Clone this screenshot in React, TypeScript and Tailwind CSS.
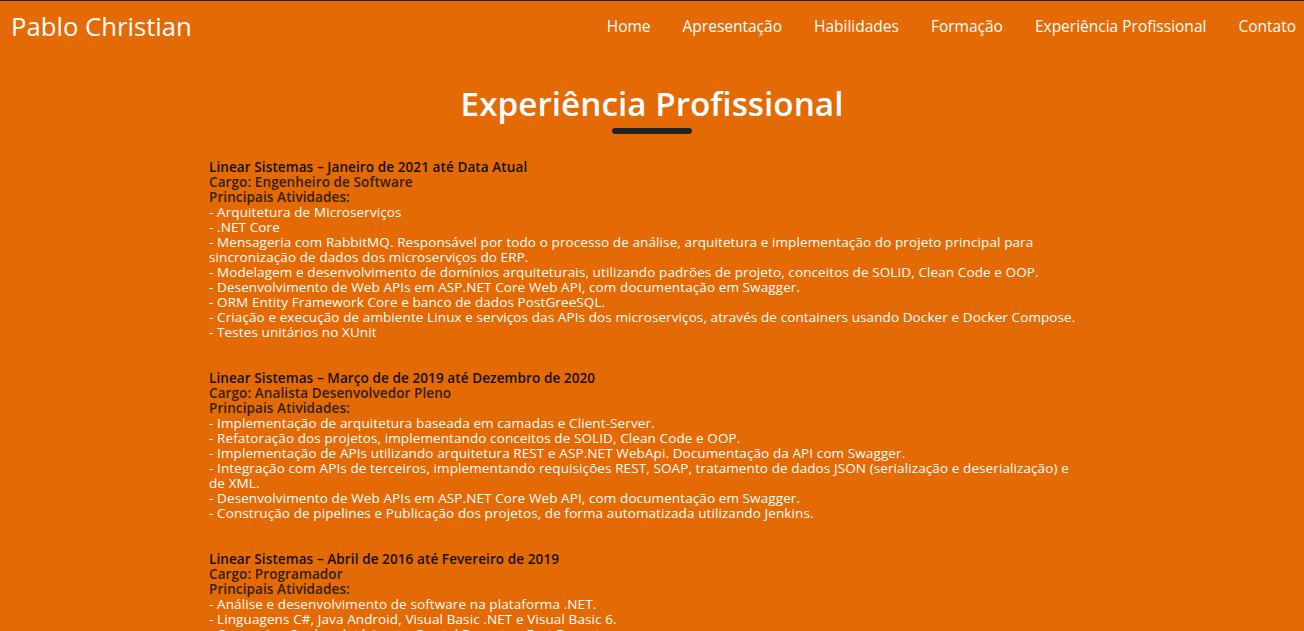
import React from "react";

const jobs = [
  {
    title: "Linear Sistemas – Janeiro de 2021 até Data Atual",
    cargo: "Cargo: Engenheiro de Software",
    items: [
      "- Arquitetura de Microserviços",
      "- .NET Core",
      "- Mensageria com RabbitMQ. Responsável por todo o processo de análise, arquitetura e implementação do projeto principal para sincronização de dados dos microserviços do ERP.",
      "- Modelagem e desenvolvimento de domínios arquiteturais, utilizando padrões de projeto, conceitos de SOLID, Clean Code e OOP.",
      "- Desenvolvimento de Web APIs em ASP.NET Core Web API, com documentação em Swagger.",
      "- ORM Entity Framework Core e banco de dados PostGreeSQL.",
      "- Criação e execução de ambiente Linux e serviços das APIs dos microserviços, através de containers usando Docker e Docker Compose.",
      "- Testes unitários no XUnit",
    ],
  },
  {
    title: "Linear Sistemas – Março de de 2019 até Dezembro de 2020",
    cargo: "Cargo: Analista Desenvolvedor Pleno",
    items: [
      "- Implementação de arquitetura baseada em camadas e Client-Server.",
      "- Refatoração dos projetos, implementando conceitos de SOLID, Clean Code e OOP.",
      "- Implementação de APIs utilizando arquitetura REST e ASP.NET WebApi. Documentação da API com Swagger.",
      "- Integração com APIs de terceiros, implementando requisições REST, SOAP, tratamento de dados JSON (serialização e deserialização) e de XML.",
      "- Desenvolvimento de Web APIs em ASP.NET Core Web API, com documentação em Swagger.",
      "- Construção de pipelines e Publicação dos projetos, de forma automatizada utilizando Jenkins.",
    ],
  },
  {
    title: "Linear Sistemas – Abril de 2016 até Fevereiro de 2019",
    cargo: "Cargo: Programador",
    items: [
      "- Análise e desenvolvimento de software na plataforma .NET.",
      "- Linguagens C#, Java Android, Visual Basic .NET e Visual Basic 6.",
      "- Customização de relatórios no Crystal Reports e Fast Reports.",
      "- Banco de dados SQL Server e Firebird.",
    ],
  },
];

const nav = ["Home", "Apresentação", "Habilidades", "Formação", "Experiência Profissional", "Contato"];

export default function App() {
  return (
    <div
      className="h-[631px] overflow-hidden bg-[#e36a04] border-t border-[#222]"
      style={{ fontFamily: '"Open Sans", sans-serif' }}
    >
      <header className="flex items-center justify-between h-[52px] pl-[11px] pr-[8px]">
        <div className="text-white text-[25.7px] leading-none">Pablo Christian</div>
        <nav className="flex gap-[32px] text-white text-[15.5px]">
          {nav.map((n) => (
            <a key={n}>{n}</a>
          ))}
        </nav>
      </header>
      <section className="flex flex-col items-center pt-[30px]">
        <h2 className="text-white font-semibold text-[33.3px] leading-[40px]">Experiência Profissional</h2>
        <div className="w-[80px] h-[6px] rounded-full bg-[#222] mt-[5px]" />
      </section>
      <div className="w-[886px] mx-auto pr-[8px] mt-[26px] text-[13.5px] leading-[15px] tracking-[0.1px]">
        {jobs.map((j, i) => (
          <div key={i} className="mb-[31px]">
            <div className="font-semibold text-[#141010]">{j.title}</div>
            <div className="font-semibold text-[#33200c]">{j.cargo}</div>
            <div className="font-semibold text-[#33200c]">Principais Atividades:</div>
            {j.items.map((t, k) => (
              <div key={k} className="text-white">{t}</div>
            ))}
          </div>
        ))}
      </div>
    </div>
  );
}
